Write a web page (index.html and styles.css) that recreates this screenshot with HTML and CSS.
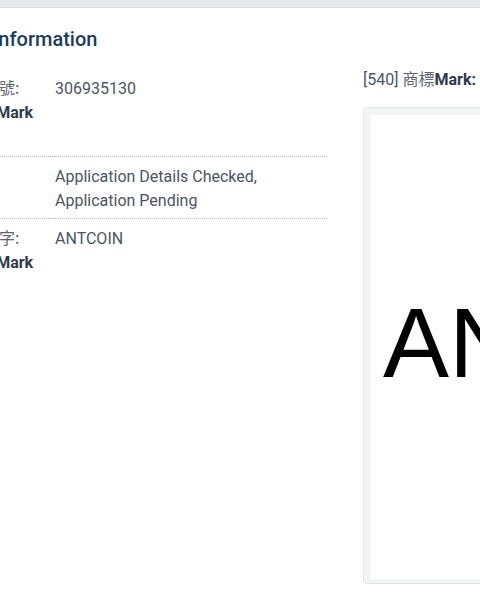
FILE: index.html
```html
<!DOCTYPE html>
<html lang="zh-HK">
<head>
  <meta charset="UTF-8" />
  <meta name="viewport" content="width=device-width, initial-scale=1" />
  <title>商標資料 Trade Mark Information</title>
  <link rel="stylesheet" href="styles.css">
</head>
<body>

  <div class="topbar"></div>

  <div class="page">
    <h2 class="section-title">Trade Mark Information</h2>

    <div class="columns">
      <table class="info-table">
        <tbody>
          <tr>
            <th><span class="zh">商標編號:</span><br><b>Trade Mark No.</b></th>
            <td>306935130</td>
          </tr>
          <tr>
            <th><span class="zh">狀況:</span><br><b>Status</b></th>
            <td>Application Details Checked, Application Pending</td>
          </tr>
          <tr>
            <th><span class="zh">商標文字:</span><br><b>Trade Mark Text</b></th>
            <td>ANTCOIN</td>
          </tr>
        </tbody>
      </table>

      <div class="mark">
        <div class="mark-label">[540] <span class="zh">商標</span><b>Mark:</b></div>
        <div class="thumb">
          <div class="mark-image">ANTCOIN</div>
        </div>
      </div>
    </div>
  </div>

</body>
</html>
```

FILE: styles.css
```css
html, body {
  margin: 0;
  background: #fff;
  overflow: hidden;
}
body {
  font-family: Roboto, "Noto Sans CJK TC", sans-serif;
  font-size: 16px;
  line-height: 24px;
  color: #4b5563;
}
.topbar {
  height: 7px;
  background: #e6e9ec;
  border-bottom: 1px solid #dde1e5;
}
.page {
  margin-left: -114px;
}
.section-title {
  margin: 19px 0 0;
  font-size: 20px;
  font-weight: 500;
  line-height: 24px;
  color: #1d3b5e;
}
.columns {
  display: flex;
  gap: 36px;
  margin-top: 17px;
}
.zh {
  font-family: "Noto Sans CJK TC", sans-serif;
  font-weight: 400;
  line-height: 20px;
  color: #5f6670;
}
b {
  font-weight: 700;
  color: #2f3b4a;
}
.info-table {
  width: 376px;
  margin-left: 65px;
  border-collapse: collapse;
  flex-shrink: 0;
  align-self: flex-start;
}
.info-table th,
.info-table td {
  padding: 8px 0 5px;
  text-align: left;
  vertical-align: top;
  font-weight: 400;
}
.info-table tr:first-child th,
.info-table tr:first-child td {
  padding: 9px 0 7px;
}
.info-table th {
  width: 104px;
}
.info-table tr + tr th,
.info-table tr + tr td {
  border-top: 1px dotted #b5b9be;
}
.mark {
  flex-shrink: 0;
}
.mark-label {
  color: #4b5563;
}
.thumb {
  margin-top: 15px;
  padding: 7px 6px 4px 7px;
  background: #f3f4f5;
  border: 1px solid #e2e4e6;
  border-radius: 4px;
  width: 474px;
}
.mark-image {
  height: 464px;
  padding: 0 0 10px 12px;
  box-sizing: border-box;
  background: #fff;
  display: flex;
  align-items: center;
  font-family: "Liberation Sans", Arial, sans-serif;
  font-size: 99px;
  line-height: 1;
  color: #000;
}
```
